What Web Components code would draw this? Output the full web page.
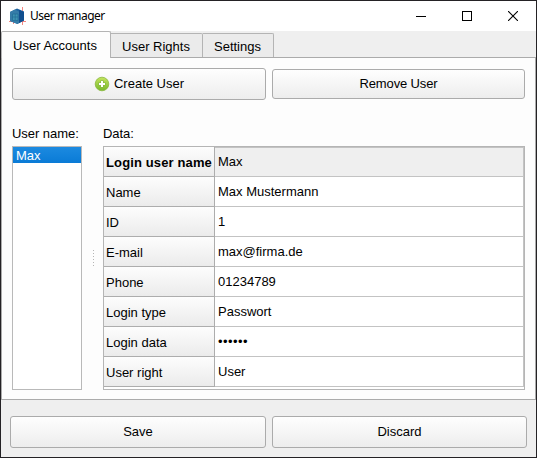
<!DOCTYPE html>
<html lang="en"><head><meta charset="utf-8"><title>User manager</title>
<style>html,body{margin:0;height:100%;overflow:hidden}body{font:13px/16px "Liberation Sans",Arial,sans-serif;color:#000}</style></head>
<body>
<user-manager></user-manager>
<script>
const define=(name,html,setup)=>customElements.define(name,class extends HTMLElement{
  constructor(){super();const t=document.createElement('template');t.innerHTML=html;this.attachShadow({mode:'open'}).append(t.content.cloneNode(true));}
  connectedCallback(){if(setup)setup(this,this.shadowRoot);}
});

define('title-bar',`<style>
:host{display:flex;height:30px;background:#fff;align-items:center;box-sizing:border-box;padding-left:8px;font:12px/16px "Noto Sans","Open Sans",sans-serif}
.name{flex:1;margin-left:4px;letter-spacing:-.48px}
.ctl{width:46px;display:flex;justify-content:center}.ctl svg{display:block}
.logo{display:block}.ctls{display:flex}</style>
<svg class="logo" width="17" height="18" viewBox="0 0 17 18"><path d="M0 14.5H5M12 14.5H17M13.5 0V4M13.5 13V18M4.5 14V17" stroke="#f58680" fill="none"/><path d="M8 1.5 15 4.5V13.5L8.5 17 1 14V5Z" fill="#1d629f"/><path d="M1 5 6 2.5 10 4.5V15.5L8.5 17 1 14Z" fill="#357ca8"/><path d="M10 3 15 5V13.5L10 16Z" fill="#114e8e"/><path d="M3.5 7H9V13.5H3.5ZM6.2 7V13M3.5 10H9" fill="#3e93b2" stroke="#216a95" stroke-width=".7"/></svg>
<span class="name"><slot></slot></span>
<div class="ctls"><span class="ctl"><svg width="10" height="10" shape-rendering="crispEdges"><path d="M0 5.5H10" stroke="#000"/></svg></span>
<span class="ctl"><svg width="10" height="10" shape-rendering="crispEdges"><path d="M.5 .5H9.5V9.5H.5Z" stroke="#000" fill="none"/></svg></span>
<span class="ctl"><svg width="10" height="10"><path d="M0 0 10 10M10 0 0 10" stroke="#000" stroke-width="1.1"/></svg></span></div>`);

define('tab-item',`<style>
:host{display:block;box-sizing:border-box;height:25px;margin-top:2px;border:1px solid #b4b4b4;border-left:0;border-bottom-color:#a8a8a8;border-radius:0 2px 0 0;background:#ebebeb;text-align:center;line-height:25px;padding-right:1px}
:host([active]){height:27px;margin-top:0;border-left:1px solid #b4b4b4;border-bottom:0;border-radius:2px 2px 0 0;background:#fdfdfd;line-height:27px;position:relative;padding-right:2px}
</style><slot></slot>`);

define('push-button',`<style>
:host{display:flex;box-sizing:border-box;align-items:center;justify-content:center;height:32px;border:1px solid #ababab;border-radius:3px;background:linear-gradient(#fefefe,#ededed)}
::slotted(plus-icon){margin-right:4px}</style><slot></slot>`);

define('plus-icon',`<style>:host{display:block;width:16px;height:16px}svg{display:block}</style>
<svg width="16" height="16" viewBox="0 0 16 16"><defs><linearGradient id="g" x2="0" y2="1"><stop stop-color="#c4e45e"/><stop offset="1" stop-color="#77b82b"/></linearGradient></defs><circle cx="8" cy="8" r="6.8" fill="url(#g)" stroke="#89b83c" stroke-width=".8"/><path d="M8 4.4V11.6M4.4 8H11.6" stroke="#84b544" stroke-width="3.2"/><path d="M8 5V11M5 8H11" stroke="#fff" stroke-width="2"/></svg>`);

define('user-list',`<style>:host{display:block;box-sizing:border-box;height:244px;border:1px solid #b9b9b9;background:#fff}
::slotted(*){display:block;height:16px;line-height:17px;padding-left:3px;color:#fff;background:linear-gradient(#1c8ae0,#0a7bd6)}</style><slot></slot>`);

define('data-row',`<style>
:host{display:grid;grid-template:30px/111px 1fr;height:30px}
div{box-sizing:border-box;height:30px;border-bottom:1px solid #c3c3c3;white-space:nowrap}
.h{border-right:1px solid #adadad;border-bottom-color:#adadad;background:linear-gradient(#fdfdfd,#ebebeb);padding-left:2px;line-height:31px}
.v{border-right:1px solid #c3c3c3;background:#fff;padding-left:3px;line-height:29px}
:host([masked]) .v{letter-spacing:.43px}
:host([current]) .h{font-weight:bold;letter-spacing:.13px}:host([current]) .v{background:#efefef;border-top:1px solid #c3c3c3;line-height:27px}
</style><div class="h"></div><div class="v"><slot></slot></div>`,(el,r)=>{r.querySelector('.h').textContent=el.getAttribute('label');});

define('data-table',`<style>:host{display:block;box-sizing:border-box;height:244px;border:1px solid #b5b5b5;background:#fff}</style><slot></slot>`);

define('user-manager',`<style>
:host{display:flex;flex-direction:column;box-sizing:border-box;width:537px;height:458px;border:1px solid #242225;background:#efefef}
.tabs{display:flex;height:26px}.t1{width:110px}.t2{width:92px}.t3{width:71px}
.panel{box-sizing:border-box;height:343px;border:1px solid #ababab;background:#fdfdfd;padding:10px 10px 0}
.actions{display:grid;grid-template-columns:254px 253px;gap:6px;align-items:center}
.actions .remove{height:30px;letter-spacing:-.13px}
.cols{display:grid;grid-template-columns:70px 21px 422px;margin-top:25px}
.label{height:21px;line-height:17px;white-space:nowrap;letter-spacing:-.05px}
.grip{align-self:end;width:1px;height:16px;margin:0 0 124px 11px;background:linear-gradient(#b5b5b5 1px,transparent 1px) 0 0/1px 3px}
.foot{display:grid;grid-template-columns:256px 255px;gap:6px;padding:16px 9px 0}
</style>
<title-bar>User manager</title-bar>
<div class="tabs"><tab-item class="t1" active>User Accounts</tab-item><tab-item class="t2">User Rights</tab-item><tab-item class="t3">Settings</tab-item></div>
<div class="panel">
<div class="actions"><push-button><plus-icon></plus-icon><span>Create User</span></push-button><push-button class="remove">Remove User</push-button></div>
<div class="cols"><div><div class="label">User name:</div><user-list><span>Max</span></user-list></div><div class="grip"></div>
<div><div class="label">Data:</div><data-table>
<data-row label="Login user name" current>Max</data-row><data-row label="Name">Max Mustermann</data-row><data-row label="ID">1</data-row><data-row label="E-mail">max@firma.de</data-row><data-row label="Phone">01234789</data-row><data-row label="Login type">Passwort</data-row><data-row label="Login data" masked>••••••</data-row><data-row label="User right">User</data-row>
</data-table></div></div></div>
<div class="foot"><push-button>Save</push-button><push-button>Discard</push-button></div>`);
</script></body></html>
